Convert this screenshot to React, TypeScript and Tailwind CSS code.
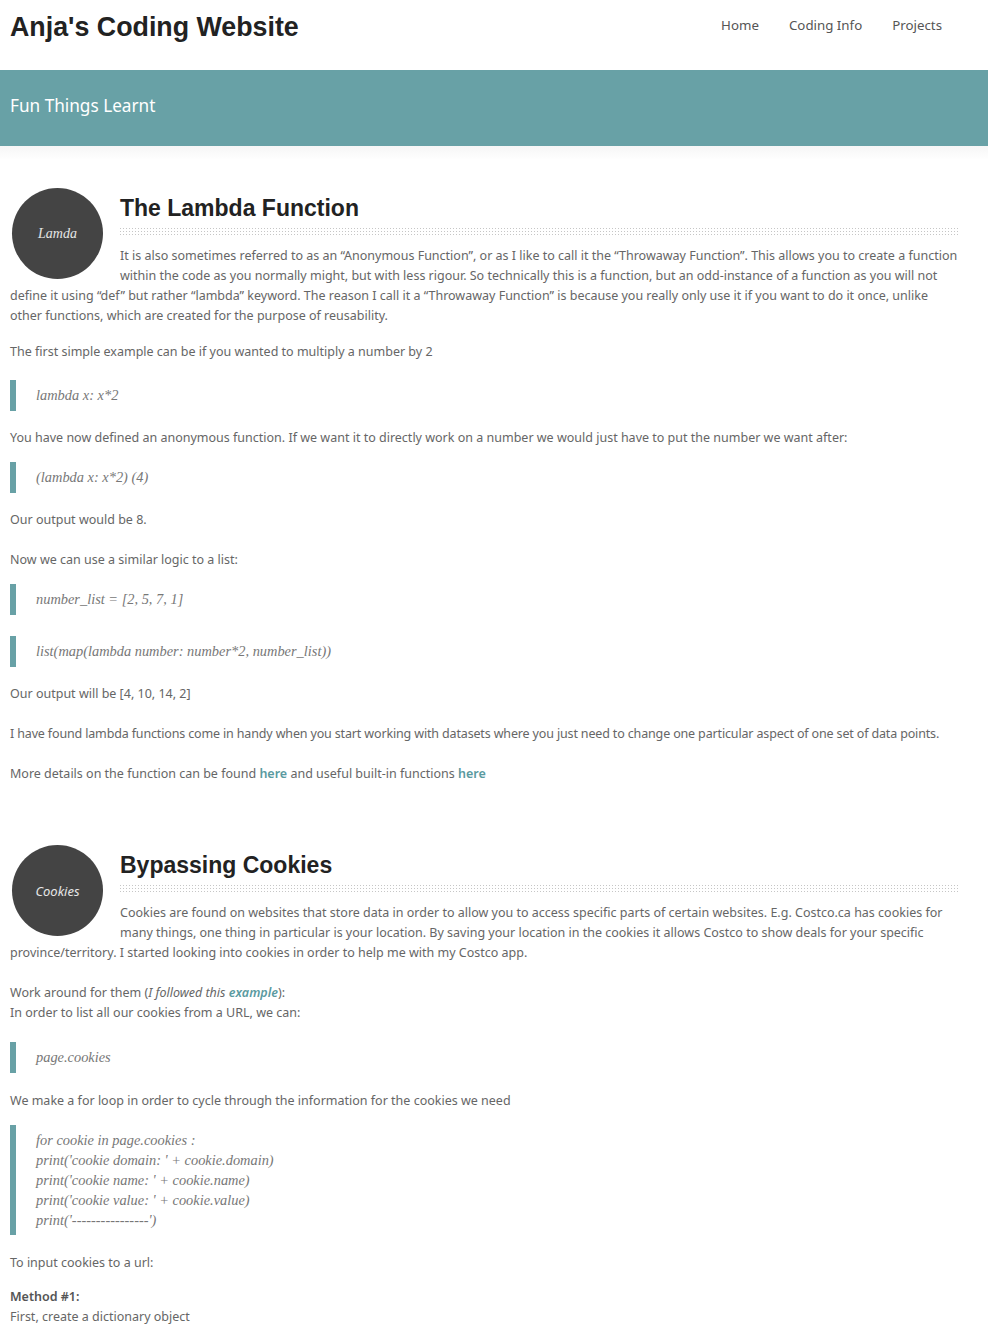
import type { ReactNode } from 'react';

const TEAL = 'bg-[#68a1a6]';

function Badge({ label, serif }: { label: string; serif?: boolean }) {
    return (
        <div
            className={`float-left ml-[2px] mr-[17px] flex h-[91px] w-[91px] items-center justify-center rounded-full bg-[#444444] text-[13px] italic text-[#e6e6e6] ${serif ? "font-['Liberation_Serif',serif] text-[14px]" : "font-['Noto_Sans',sans-serif]"}`}
        >
            {label}
        </div>
    );
}

function Heading({ children }: { children: ReactNode }) {
    return (
        <>
            <h2 className="pt-[5px] font-['Liberation_Sans',Arial,sans-serif] text-[23px] font-bold leading-[30px] text-[#222]">
                {children}
            </h2>
            <div className="mt-[3px] h-[9px] overflow-hidden bg-[linear-gradient(#fff_2px,transparent_2px),linear-gradient(90deg,#c6c6c6_1px,transparent_1px)] bg-[length:3px_3px]" />
        </>
    );
}

function Quote({ lines, className = '' }: { lines: string[]; className?: string }) {
    return (
        <blockquote
            className={`border-l-[6px] border-[#68a1a6] py-[5px] pl-[20px] font-['Liberation_Serif',serif] text-[14.4px] italic text-[#777] ${lines.length > 1 ? 'leading-[20px]' : 'leading-[21px]'} ${className}`}
        >
            {lines.map((l, i) => (
                <div key={i}>{l}</div>
            ))}
        </blockquote>
    );
}

function Link({ children, italic }: { children: ReactNode; italic?: boolean }) {
    return (
        <a href="#" className={`font-semibold text-[#5a9aa0] ${italic ? 'italic' : ''}`}>
            {children}
        </a>
    );
}

export default function App() {
    return (
        <div className="min-h-screen bg-white font-['Noto_Sans',sans-serif] text-[12.5px] leading-[20px] text-[#666]">
            <header className="flex h-[70px] items-start justify-between pl-[10px] pr-[46px]">
                <h1 className="pt-[13px] font-['Liberation_Sans',Arial,sans-serif] text-[26.8px] font-bold leading-[28px] text-[#222]">
                    Anja's Coding Website
                </h1>
                <nav className="flex gap-[30px] pt-[15px] text-[13.3px] leading-[20px] text-[#555]">
                    <a href="#">Home</a>
                    <a href="#">Coding Info</a>
                    <a href="#">Projects</a>
                </nav>
            </header>

            <div className={`h-[76px] ${TEAL} px-[10px] pt-[24px] text-[17.2px] leading-[24px] text-white`}>
                Fun Things Learnt
            </div>
            <div className="h-[14px] bg-gradient-to-b from-[#f6f6f6] to-white" />

            <main className="pl-[10px] pr-[30px]">
                <section className="mt-[28px]">
                    <Badge label="Lamda" serif />
                    <Heading>The Lambda Function</Heading>
                    <p className="mt-[11px]">
                        It is also sometimes referred to as an “Anonymous Function”, or as I like to call it the “Throwaway Function”. This allows you to create a function within the code as you normally might, but with less rigour. So technically this is a function, but an odd-instance of a function as you will not define it using “def” but rather “lambda” keyword. The reason I call it a “Throwaway Function” is because you really only use it if you want to do it once, unlike other functions, which are created for the purpose of reusability.
                    </p>
                    <p className="mt-[16px]">The first simple example can be if you wanted to multiply a number by 2</p>
                    <Quote className="mt-[18px]" lines={['lambda x: x*2']} />
                    <p className="mt-[17px]">
                        You have now defined an anonymous function. If we want it to directly work on a number we would just have to put the number we want after:
                    </p>
                    <Quote className="mt-[14px]" lines={['(lambda x: x*2) (4)']} />
                    <p className="mt-[17px]">Our output would be 8.</p>
                    <p className="mt-[20px]">Now we can use a similar logic to a list:</p>
                    <Quote className="mt-[14px]" lines={['number_list = [2, 5, 7, 1]']} />
                    <Quote className="mt-[21px]" lines={['list(map(lambda number: number*2, number_list))']} />
                    <p className="mt-[17px]">Our output will be [4, 10, 14, 2]</p>
                    <p className="mt-[20px] tracking-[-0.15px]">
                        I have found lambda functions come in handy when you start working with datasets where you just need to change one particular aspect of one set of data points.
                    </p>
                    <p className="mt-[20px]">
                        More details on the function can be found <Link>here</Link> and useful built-in functions <Link>here</Link>
                    </p>
                </section>

                <section className="mt-[61px]">
                    <Badge label="Cookies" />
                    <Heading>Bypassing Cookies</Heading>
                    <p className="mt-[11px]">
                        Cookies are found on websites that store data in order to allow you to access specific parts of certain websites. E.g. Costco.ca has cookies for many things, one thing in particular is your location. By saving your location in the cookies it allows Costco to show deals for your specific province/territory. I started looking into cookies in order to help me with my Costco app.
                    </p>
                    <p className="mt-[20px]">
                        Work around for them (<em>I followed this <Link italic>example</Link></em>):
                        <br />
                        In order to list all our cookies from a URL, we can:
                    </p>
                    <Quote className="mt-[19px]" lines={['page.cookies']} />
                    <p className="mt-[18px]">We make a for loop in order to cycle through the information for the cookies we need</p>
                    <Quote
                        className="mt-[14px]"
                        lines={[
                            'for cookie in page.cookies :',
                            "print('cookie domain: ' + cookie.domain)",
                            "print('cookie name: ' + cookie.name)",
                            "print('cookie value: ' + cookie.value)",
                            "print('----------------')",
                        ]}
                    />
                    <p className="mt-[18px]">To input cookies to a url:</p>
                    <p className="mt-[14px]">
                        <strong className="font-semibold text-[#555]">Method #1:</strong>
                        <br />
                        First, create a dictionary object
                    </p>
                </section>
            </main>
        </div>
    );
}
